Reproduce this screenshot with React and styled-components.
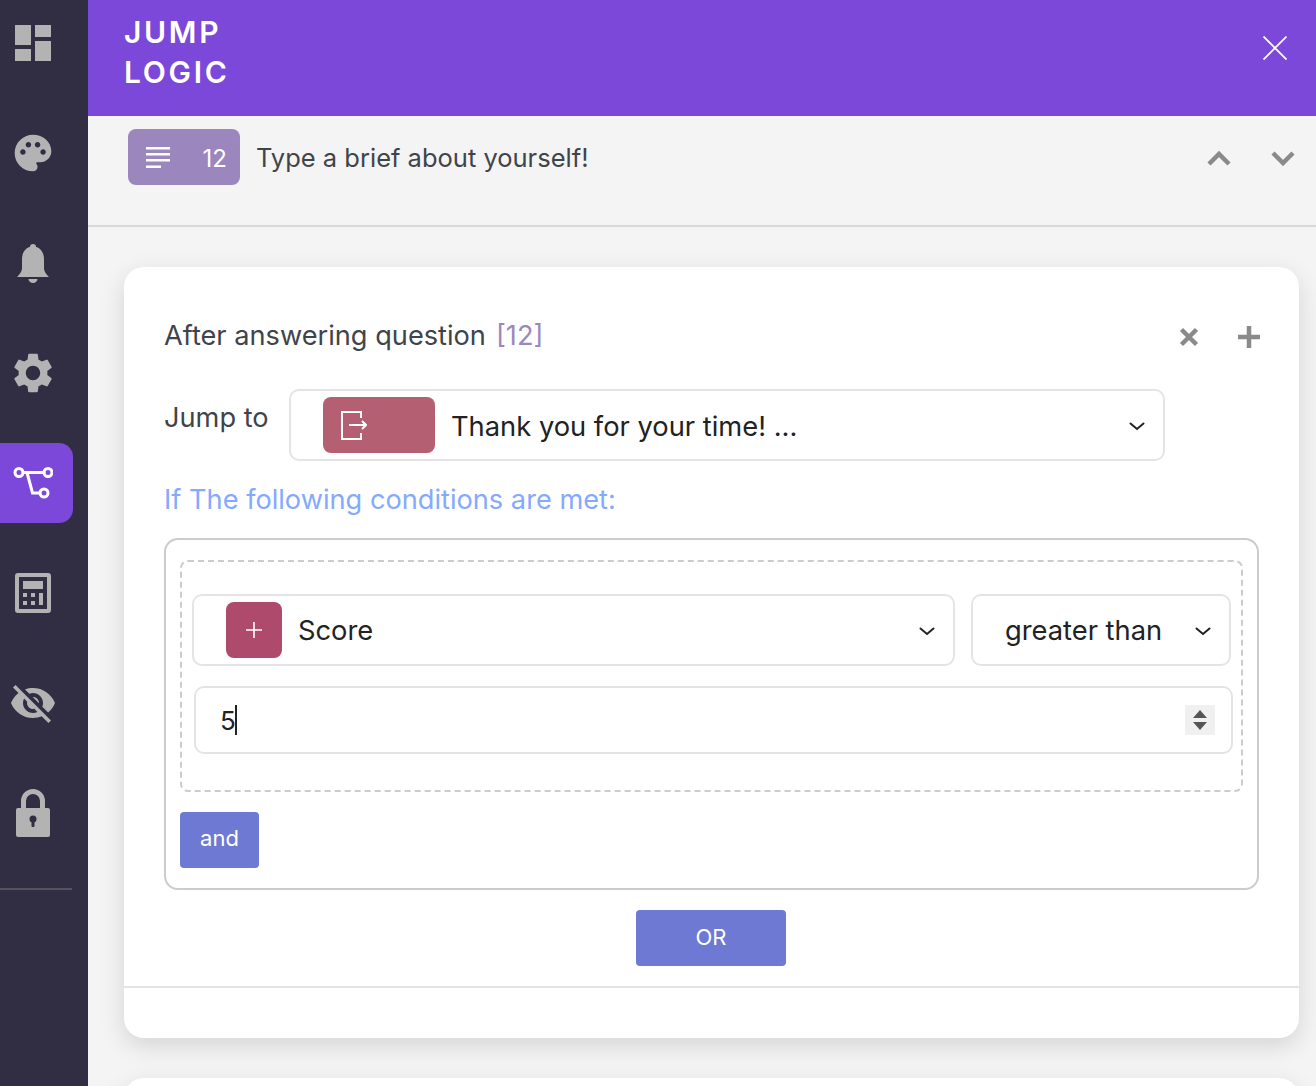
import styled, { createGlobalStyle } from "styled-components";
import { MdDashboard, MdPalette, MdSettings, MdVisibilityOff } from "react-icons/md";

const GlobalStyle = createGlobalStyle`
  html, body {
    margin: 0;
    height: 100%;
    overflow: hidden;
  }
  body {
    background: #f4f4f4;
    font-family: Inter, "Liberation Sans", sans-serif;
    color: #3f444b;
  }
  * {
    box-sizing: border-box;
  }
`;

const BellIcon = () => (
  <svg width="32" height="39" viewBox="0 0 32 39" fill="#b3b3b3">
    <circle cx="16" cy="3" r="3" />
    <path d="M16 2C9 3 5 8 5 15v9c0 4-3 7-5 9h32c-2-2-5-5-5-9v-9c0-7-4-12-11-13z" />
    <path d="M11.500 35h9a4.500 4 0 0 1-9 0z" />
  </svg>
);

const LockIcon = () => (
  <svg width="34" height="48" viewBox="0 0 34 48">
    <path d="M7.500 20v-8a9.500 9.500 0 0 1 19 0v8" fill="none" stroke="#b3b3b3" strokeWidth="5" />
    <rect y="19" width="34" height="29" rx="2" fill="#b3b3b3" />
    <circle cx="17" cy="30" r="3.500" fill="#312e43" />
    <rect x="15.500" y="30" width="3" height="8" rx="1" fill="#312e43" />
  </svg>
);

const FlowIcon = () => (
  <svg width="40" height="36" viewBox="0 0 40 36" fill="none" stroke="#fff" strokeWidth="3" strokeLinecap="round">
    <circle cx="6" cy="7.500" r="4" />
    <circle cx="35" cy="7.500" r="4" />
    <circle cx="31" cy="28" r="4" />
    <path d="M10 7.500h21M14 7.500l5.500 20.500H27" />
  </svg>
);

const CalculatorIcon = () => (
  <svg width="36" height="40" viewBox="0 0 36 40" fill="#b3b3b3">
    <path fillRule="evenodd" d="M3 0h30a3 3 0 0 1 3 3v34a3 3 0 0 1-3 3H3a3 3 0 0 1-3-3V3a3 3 0 0 1 3-3zm1 4v32h28V4z" />
    <rect x="8" y="8" width="20" height="8" />
    <rect x="8" y="20" width="4" height="4" />
    <rect x="16" y="20" width="4" height="4" />
    <rect x="8" y="28" width="4" height="4" />
    <rect x="16" y="28" width="4" height="4" />
    <rect x="24" y="20" width="4" height="12" />
  </svg>
);

const LinesIcon = () => (
  <svg width="24" height="22" viewBox="0 0 24 22" fill="#fff">
    <rect width="24" height="2.500" />
    <rect y="6" width="24" height="2.500" />
    <rect y="12" width="24" height="2.500" />
    <rect y="18.500" width="15" height="2.500" />
  </svg>
);

const ExitIcon = () => (
  <svg width="26" height="29" viewBox="0 0 26 29" fill="none" stroke="#fff" strokeWidth="2">
    <path d="M20 7V1H1v27h19v-6" />
    <path d="M8 14h17M21 10l4 4-4 4" />
  </svg>
);

const PlusThin = () => (
  <svg width="16" height="16" viewBox="0 0 16 16" stroke="#fff" strokeWidth="1.600">
    <path d="M8 0v16M0 8h16" />
  </svg>
);

const CloseThin = () => (
  <svg width="24" height="24" viewBox="0 0 24 24" stroke="#fff" strokeWidth="1.800">
    <path d="M0.500 0.500l23 23M23.500 0.500l-23 23" />
  </svg>
);

const Chevron = ({ up }) => (
  <svg width="24" height="16" viewBox="0 0 24 16" fill="none" stroke="#8a8a8a" strokeWidth="4.500">
    <path d={up ? "M2 14L12 4l10 10" : "M2 3l10 10L22 3"} />
  </svg>
);

const ChevronSvg = styled.svg`
  flex: none;
  margin-top: 2px;
`;

const SmallChevron = () => (
  <ChevronSvg width="16" height="9" viewBox="0 0 16 9" fill="none" stroke="#222" strokeWidth="2" strokeLinecap="round">
    <path d="M1.500 1.500L8 7l6.500-5.500" />
  </ChevronSvg>
);

const CrossIcon = () => (
  <svg width="20" height="20" viewBox="0 0 20 20" stroke="#8a8a8a" strokeWidth="4.500">
    <path d="M2.500 2.500l15 15M17.500 2.500l-15 15" />
  </svg>
);

const PlusIcon = () => (
  <svg width="22" height="22" viewBox="0 0 22 22" stroke="#8a8a8a" strokeWidth="4.500">
    <path d="M11 0v22M0 11h22" />
  </svg>
);

const Page = styled.div`
  display: flex;
  height: 1086px;
  overflow: hidden;
`;

const Sidebar = styled.nav`
  flex: 0 0 88px;
  display: flex;
  flex-direction: column;
  background: #312e43;
  padding-top: 3px;
`;

const NavItem = styled.div`
  flex: none;
  width: 73px;
  height: 80px;
  margin-bottom: 30px;
  padding-right: 7px;
  display: flex;
  align-items: center;
  justify-content: center;
  color: #b3b3b3;
  border-radius: 0 14px 14px 0;
  background: ${(p) => (p.$active ? "#7b48d9" : "transparent")};
`;

const SideRule = styled.div`
  flex: none;
  width: 72px;
  height: 2px;
  margin-top: 5px;
  background: #55535f;
`;

const Main = styled.main`
  flex: 1;
  min-width: 0;
`;

const Header = styled.header`
  height: 116px;
  background: #7b48d9;
  padding: 12px 29px 0 36px;
  display: flex;
  justify-content: space-between;
  align-items: flex-start;
`;

const Title = styled.h1`
  margin: 0;
  width: 140px;
  color: #fff;
  font-size: 30px;
  font-weight: 600;
  line-height: 40px;
  letter-spacing: 2.700px;
`;

const CloseButton = styled.div`
  margin-top: 24px;
  height: 24px;
`;

const QuestionBar = styled.div`
  height: 111px;
  padding: 13px 17px 0 40px;
  display: flex;
  align-items: flex-start;
  border-bottom: 2px solid #d8d8d8;
`;

const QuestionBadge = styled.div`
  width: 112px;
  height: 56px;
  padding: 2px 13px 0 18px;
  display: flex;
  align-items: center;
  justify-content: space-between;
  border-radius: 8px;
  background: #9b86bd;
  color: #fff;
  font-size: 24px;
`;

const QuestionText = styled.div`
  flex: 1;
  margin-left: 16px;
  line-height: 58px;
  font-size: 25.500px;
`;

const Arrows = styled.div`
  display: flex;
  gap: 40px;
  padding: 21px 4px 0 0;
`;

const List = styled.div`
  padding: 40px 17px 0 36px;
  display: flex;
  flex-direction: column;
  gap: 40px;
`;

const Card = styled.section`
  flex: none;
  min-height: ${(p) => (p.$empty ? "200px" : "auto")};
  border-radius: 20px;
  background: #fff;
  box-shadow: 0 8px 24px rgba(0, 0, 0, 0.13);
  padding: 51px 0 50px;
`;

const CardBody = styled.div`
  padding: 0 40px;
`;

const CardHead = styled.div`
  height: 36px;
  display: flex;
  align-items: center;
  justify-content: space-between;
  font-size: 27.200px;
  line-height: 34px;
`;

const QuestionRef = styled.span`
  margin-left: 10px;
  color: #9b86bd;
`;

const HeadActions = styled.div`
  display: flex;
  align-items: center;
  gap: 39px;
  margin-right: -1px;
  padding-top: 2px;
`;

const JumpRow = styled.div`
  display: flex;
  margin-top: 35px;
`;

const JumpLabel = styled.div`
  width: 125px;
  font-size: 27.200px;
  line-height: 58px;
`;

const Select = styled.div`
  height: 72px;
  width: ${(p) => p.$width};
  flex: ${(p) => (p.$width ? "none" : 1)};
  padding: 6px 18px 6px ${(p) => p.$left || "32px"};
  display: flex;
  align-items: center;
  border: 2px solid #e4e4e4;
  border-radius: 10px;
  color: #222;
  font-size: 27.300px;
`;

const SelectText = styled.span`
  flex: 1;
  margin-left: ${(p) => p.$gap || "0"};
  padding-top: ${(p) => p.$nudge || "0"};
`;

const ColorBadge = styled.div`
  flex: none;
  width: ${(p) => p.$width};
  height: 56px;
  padding-left: ${(p) => p.$pad || "0"};
  display: flex;
  align-items: center;
  justify-content: ${(p) => (p.$pad ? "flex-start" : "center")};
  border-radius: 8px;
  background: ${(p) => p.$color};
`;

const ConditionLabel = styled.div`
  margin-top: 21px;
  font-size: 27.200px;
  line-height: 36px;
  color: #84a9ff;
`;

const ConditionBox = styled.div`
  margin-top: 20px;
  padding: 20px 14px;
  border: 2px solid #cccccc;
  border-radius: 14px;
`;

const DashedBox = styled.div`
  padding: 32px 10px 36px;
  border: 2px dashed #cccccc;
  border-radius: 8px;
`;

const SelectRow = styled.div`
  display: flex;
  gap: 16px;
`;

const NumberField = styled.div`
  height: 68px;
  margin: 20px -2px 0 2px;
  padding: 0 16px 0 24px;
  display: flex;
  align-items: center;
  justify-content: space-between;
  border: 2px solid #e4e4e4;
  border-radius: 10px;
  color: #222;
  font-size: 26px;
`;

const Caret = styled.span`
  display: inline-block;
  width: 2px;
  height: 30px;
  margin-left: -1px;
  vertical-align: -5px;
  background: #222;
`;

const Spinner = styled.div`
  width: 30px;
  height: 30px;
  display: flex;
  flex-direction: column;
  align-items: center;
  justify-content: center;
  gap: 4px;
  background: #f0f0f0;
`;

const SpinUp = styled.div`
  border: 7px solid transparent;
  border-top: 0;
  border-bottom: 8px solid #555;
`;

const SpinDown = styled.div`
  border: 7px solid transparent;
  border-bottom: 0;
  border-top: 8px solid #555;
`;

const ActionButton = styled.div`
  width: ${(p) => p.$width};
  height: 56px;
  margin: 20px 0 0 ${(p) => p.$left || "0"};
  display: flex;
  align-items: center;
  justify-content: center;
  padding-bottom: ${(p) => p.$lift || "4px"};
  border-radius: 4px;
  background: #6d79d3;
  color: #fff;
  font-size: 22px;
`;

const CardRule = styled.div`
  height: 2px;
  margin-top: 20px;
  background: #e4e4e4;
`;

const App = () => {
  return (
    <>
      <GlobalStyle />
      <Page>
        <Sidebar>
          <NavItem><MdDashboard size={48} /></NavItem>
          <NavItem><MdPalette size={44} /></NavItem>
          <NavItem><BellIcon /></NavItem>
          <NavItem><MdSettings size={48} /></NavItem>
          <NavItem $active><FlowIcon /></NavItem>
          <NavItem><CalculatorIcon /></NavItem>
          <NavItem><MdVisibilityOff size={48} /></NavItem>
          <NavItem><LockIcon /></NavItem>
          <SideRule />
        </Sidebar>
        <Main>
          <Header>
            <Title>JUMP LOGIC</Title>
            <CloseButton><CloseThin /></CloseButton>
          </Header>
          <QuestionBar>
            <QuestionBadge>
              <LinesIcon />
              <span>12</span>
            </QuestionBadge>
            <QuestionText>Type a brief about yourself!</QuestionText>
            <Arrows>
              <Chevron up />
              <Chevron />
            </Arrows>
          </QuestionBar>
          <List>
            <Card>
              <CardBody>
                <CardHead>
                  <div>
                    After answering question
                    <QuestionRef>[12]</QuestionRef>
                  </div>
                  <HeadActions>
                    <CrossIcon />
                    <PlusIcon />
                  </HeadActions>
                </CardHead>
                <JumpRow>
                  <JumpLabel>Jump to</JumpLabel>
                  <Select $width="876px">
                    <ColorBadge $width="112px" $color="#b55f72" $pad="18px">
                      <ExitIcon />
                    </ColorBadge>
                    <SelectText $gap="16px" $nudge="2px">Thank you for your time! ...</SelectText>
                    <SmallChevron />
                  </Select>
                </JumpRow>
                <ConditionLabel>If The following conditions are met:</ConditionLabel>
                <ConditionBox>
                  <DashedBox>
                    <SelectRow>
                      <Select>
                        <ColorBadge $width="56px" $color="#ae4a6c">
                          <PlusThin />
                        </ColorBadge>
                        <SelectText $gap="16px">Score</SelectText>
                        <SmallChevron />
                      </Select>
                      <Select $width="260px" $left="32px">
                        <SelectText>greater than</SelectText>
                        <SmallChevron />
                      </Select>
                    </SelectRow>
                    <NumberField>
                      <span>5<Caret /></span>
                      <Spinner>
                        <SpinUp />
                        <SpinDown />
                      </Spinner>
                    </NumberField>
                  </DashedBox>
                  <ActionButton $width="79px">and</ActionButton>
                </ConditionBox>
                <ActionButton $width="150px" $left="472px" $lift="2px">OR</ActionButton>
              </CardBody>
              <CardRule />
            </Card>
            <Card $empty />
          </List>
        </Main>
      </Page>
    </>
  );
};

export default App;
